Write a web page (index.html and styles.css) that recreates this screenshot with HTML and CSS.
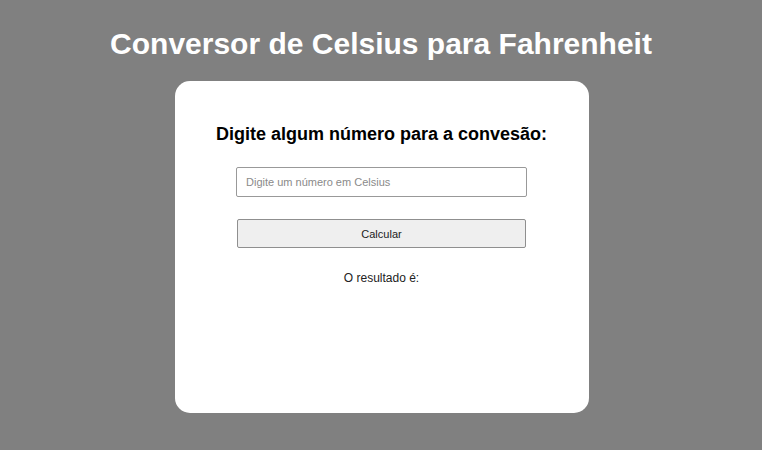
FILE: index.html
```html
<!DOCTYPE html>
<html lang="pt-BR">
<head>
<meta charset="utf-8">
<title>Conversor</title>
<link rel="stylesheet" href="styles.css">
</head>
<body>
<h1 class="title">Conversor de Celsius para Fahrenheit</h1>
<main class="card">
  <h3 class="prompt">Digite algum número para a convesão:</h3>
  <input class="field" type="text" placeholder="Digite um número em Celsius">
  <button class="btn" type="button">Calcular</button>
  <p class="result">O resultado é:</p>
</main>
</body>
</html>
```

FILE: styles.css
```css
html, body {
  margin: 0;
  padding: 0;
}
body {
  background: #808080;
  font-family: "Liberation Sans", Arial, sans-serif;
  display: flex;
  flex-direction: column;
  align-items: center;
  min-height: 450px;
}
.title {
  color: #fff;
  font-size: 30px;
  font-weight: bold;
  margin: 26px 0 0;
  line-height: 35px;
}
.card {
  margin-top: 20px;
  margin-left: 2px;
  width: 414px;
  height: 332px;
  box-sizing: border-box;
  background: #fff;
  border-radius: 15px;
  display: flex;
  flex-direction: column;
  align-items: center;
  padding-top: 43px;
  padding-right: 1px;
}
.prompt {
  margin: 0;
  font-size: 18px;
  line-height: 21px;
  color: #000;
}
.field {
  margin-top: 22px;
  width: 291px;
  height: 30px;
  box-sizing: border-box;
  border: 1px solid #999;
  border-radius: 2px;
  padding: 0 9px;
  font-family: "Liberation Sans", Arial, sans-serif;
  font-size: 11px;
  color: #333;
  background: #fff;
}
.field::placeholder {
  color: #8a8a8a;
}
.btn {
  margin-top: 22px;
  width: 289px;
  height: 29px;
  box-sizing: border-box;
  border: 1px solid #8f8f8f;
  border-radius: 2px;
  background: #efefef;
  font-family: "Liberation Sans", Arial, sans-serif;
  font-size: 11px;
  color: #222;
}
.result {
  margin: 23px 0 0;
  font-size: 12px;
  line-height: 14px;
  color: #222;
}
```
